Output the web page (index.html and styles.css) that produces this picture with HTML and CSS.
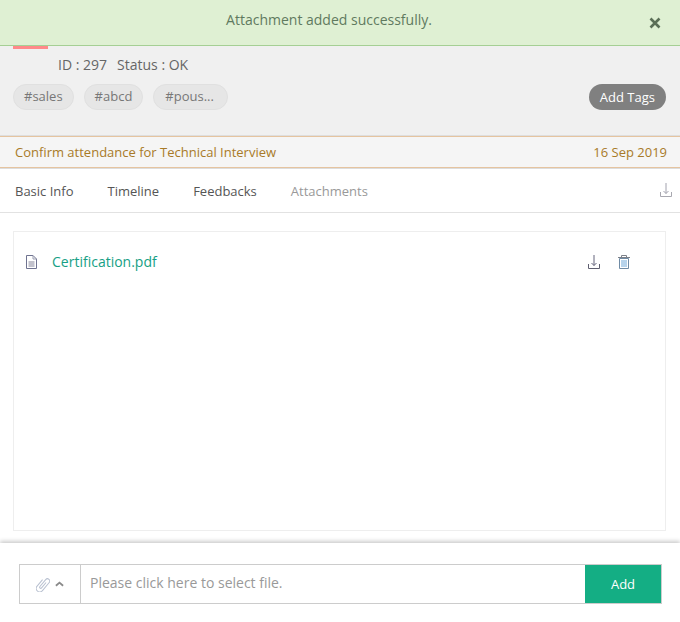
FILE: index.html
```html
<!DOCTYPE html>
<html lang="en">
<head>
<meta charset="utf-8">
<title>Attachments</title>
<link rel="stylesheet" href="styles.css">
</head>
<body>
<div class="alert">
  <span class="alert-text">Attachment added successfully.</span>
  <svg class="alert-close" width="12" height="12" viewBox="0 0 12 12"><path d="M1.500 1.500l9 9M10.500 1.500l-9 9" stroke="#5b6f57" stroke-width="2.600" fill="none"/></svg>
</div>
<section class="head">
  <div class="flag"></div>
  <div class="meta"><span>ID : 297</span><span>Status : OK</span></div>
  <div class="tag-row">
    <span class="tag">#sales</span>
    <span class="tag">#abcd</span>
    <span class="tag tag-long">#pous...</span>
    <span class="add-tags">Add Tags</span>
  </div>
</section>
<div class="notice"><span>Confirm attendance for Technical Interview</span><span>16 Sep 2019</span></div>
<nav class="tabs">
  <span class="tab">Basic Info</span>
  <span class="tab">Timeline</span>
  <span class="tab">Feedbacks</span>
  <span class="tab tab-active">Attachments</span>
  <svg class="tabs-dl" width="12" height="14" viewBox="0 0 12 14"><path d="M6 0v10.500M3.500 8l2.500 2.500L8.500 8" stroke="#a2a2ae" fill="none"/><path d="M.5 9v4.500h11V9" stroke="#a8a8b0" fill="none"/></svg>
</nav>
<main class="content">
  <div class="card">
    <div class="file">
      <svg class="file-icon" width="11" height="14" viewBox="0 0 11 14"><path d="M.5.5h6.500l3.500 3.500v9.500H.5z" fill="#fff" stroke="#6f7390"/><path d="M7 .5V4h3.500" fill="none" stroke="#9a9db0"/><path d="M2.500 7h6M2.500 9h6M2.500 11h6" stroke="#85859a" stroke-width="1.200"/></svg>
      <span class="file-name">Certification.pdf</span>
      <div class="file-actions">
        <svg width="12" height="14" viewBox="0 0 12 14"><path d="M6 0v10.500M3.500 8l2.500 2.500L8.500 8" stroke="#65657c" fill="none"/><path d="M.5 9v4.500h11V9" stroke="#5f5f70" fill="none"/></svg>
        <svg width="12" height="14" viewBox="0 0 12 14"><path d="M0 2.500h12M3.500 2.500V.5h5v2" stroke="#7c8088" fill="none"/><path d="M1.500 3.500h9v10h-9z" fill="#fff" stroke="#6f8ba5"/><path d="M4 5v7M6 5v7M8 5v7" stroke="#6fa8d8"/></svg>
      </div>
    </div>
  </div>
</main>
<footer class="foot">
  <div class="upload">
    <div class="upload-toggle">
      <svg width="14" height="15" viewBox="0 0 14 15"><g transform="rotate(40 7 7.500)"><path d="M3.500 4v8.500a3.500 3.500 0 0 0 7 0V2a2.300 2.300 0 0 0-4.600 0V11a1.100 1.100 0 0 0 2.200 0V4" stroke="#b8c0d0" fill="none"/></g></svg>
      <svg width="9" height="6" viewBox="0 0 10 6"><path d="M1 5l4-3.500 4 3.500" stroke="#8a8a8a" stroke-width="2" fill="none"/></svg>
    </div>
    <div class="upload-field">Please click here to select file.</div>
    <div class="upload-add">Add</div>
  </div>
</footer>
</body>
</html>
```
FILE: styles.css
```css
* { box-sizing: border-box; }
html, body { margin: 0; padding: 0; }
body {
  width: 680px;
  height: 622px;
  overflow: hidden;
  background: #fff;
  font-family: "Open Sans", sans-serif;
  font-size: 13px;
  color: #555;
  display: flex;
  flex-direction: column;
}
.alert {
  height: 46px;
  flex: none;
  background: #dff0d3;
  border-bottom: 1px solid #a5cf94;
  display: flex;
  align-items: center;
  justify-content: center;
  position: relative;
  color: #5f7a5f;
  font-size: 14px;
  padding: 0 22px 6px 0;
}
.alert-close { position: absolute; left: 649px; top: 17px; }
.head {
  height: 90px;
  flex: none;
  background: #f0f0f0;
  padding: 0 13px;
  border-bottom: 1px solid #dedede;
  position: relative;
}
.flag { position: absolute; left: 13px; top: 0; width: 35px; height: 3px; background: #ff8a8a; }
.meta { padding: 9px 0 0 45px; font-size: 14px; line-height: 20px; color: #666; display: flex; gap: 10px; }
.tag-row { display: flex; gap: 10px; margin-top: 9px; align-items: center; }
.tag {
  height: 26px;
  padding: 0 10px;
  border-radius: 13px;
  background: #e6e6e6;
  border: 1px solid #e0e0e0;
  color: #777;
  line-height: 23px;
  display: block;
}
.tag-long { padding: 0 13px 0 11px; }
.add-tags {
  margin-left: auto;
  margin-right: 1px;
  height: 26px;
  line-height: 26px;
  padding: 0 11px;
  border-radius: 13px;
  background: #808080;
  color: #fff;
}
.notice {
  height: 32px;
  flex: none;
  background: #f5f5f5;
  border-top: 1px solid #e5c4a0;
  border-bottom: 1px solid #e5c4a0;
  display: flex;
  align-items: center;
  justify-content: space-between;
  padding: 0 13px 0 15px;
  color: #a87a28;
  box-shadow: 0 1px 0 #ddd;
}
.tabs {
  height: 45px;
  flex: none;
  border-bottom: 1px solid #e2e2e2;
  display: flex;
  align-items: center;
  gap: 34px;
  padding: 2px 8px 0 15px;
}
.tab { color: #555; }
.tab-active { color: #999; }
.tabs-dl { margin: 0 0 2px auto; }
.content { flex: 1; padding: 18px 14px 12px 13px; min-height: 0; }
.card { height: 100%; border: 1px solid #eee; padding: 21px 35px 0 12px; }
.file { display: flex; align-items: center; height: 18px; }
.file-icon { flex: none; }
.file-name { margin: 0 0 2px 15px; font-size: 14px; color: #16a085; }
.file-actions { margin-left: auto; display: flex; gap: 18px; align-items: center; }
.foot {
  height: 79px;
  flex: none;
  box-shadow: 0 -2px 4px rgba(0,0,0,.2);
  padding: 21px 18px 0 19px;
}
.upload { height: 40px; border: 1px solid #ccc; display: flex; }
.upload-toggle { width: 61px; flex: none; border-right: 1px solid #ccc; display: flex; align-items: center; gap: 5px; padding-left: 16px; }
.upload-field { flex: 1; padding-left: 9px; line-height: 36px; font-size: 14px; color: #999; }
.upload-add { width: 76px; background: #14ae84; color: #fff; text-align: center; line-height: 38px; }
```
